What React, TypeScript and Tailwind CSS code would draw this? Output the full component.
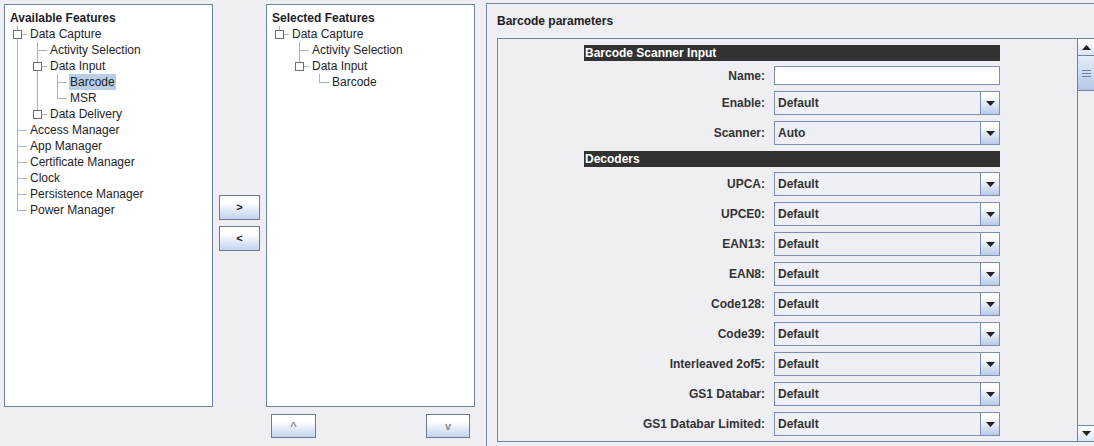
import React from 'react'

type Node = { label: string; children?: Node[]; selected?: boolean }
type Row = { label: string; guides: boolean[]; last: boolean; handle: boolean; selected?: boolean }

const available: Node[] = [
  {
    label: 'Data Capture',
    children: [
      { label: 'Activity Selection' },
      { label: 'Data Input', children: [{ label: 'Barcode', selected: true }, { label: 'MSR' }] },
      { label: 'Data Delivery', children: [] },
    ],
  },
  { label: 'Access Manager' },
  { label: 'App Manager' },
  { label: 'Certificate Manager' },
  { label: 'Clock' },
  { label: 'Persistence Manager' },
  { label: 'Power Manager' },
]

const selected: Node[] = [
  {
    label: 'Data Capture',
    children: [{ label: 'Activity Selection' }, { label: 'Data Input', children: [{ label: 'Barcode' }] }],
  },
]

function flatten(nodes: Node[], guides: boolean[] = []): Row[] {
  const out: Row[] = []
  nodes.forEach((n, i) => {
    const last = i === nodes.length - 1
    out.push({ label: n.label, guides, last, handle: !!n.children, selected: n.selected })
    if (n.children && n.children.length) out.push(...flatten(n.children, [...guides, !last]))
  })
  return out
}

const LINE = 'bg-[#a2b2cc]'

function TreeRow({ row }: { row: Row }) {
  return (
    <div className="flex h-[16px] items-center pl-[2px]">
      {row.guides.map((g, i) => (
        <div key={i} className="relative h-full w-[20px] shrink-0">
          {g && <div className={`absolute left-[10px] top-0 bottom-0 w-px ${LINE}`} />}
        </div>
      ))}
      <div className="relative h-full w-[20px] shrink-0">
        <div className={`absolute left-[10px] top-0 w-px ${LINE} ${row.last ? 'h-[8px]' : 'h-full'}`} />
        <div className={`absolute left-[10px] top-[8px] h-px w-[10px] ${LINE}`} />
        {row.handle && (
          <div className="absolute left-[6px] top-[4px] h-[9px] w-[9px] border border-[#6e6e78] bg-white" />
        )}
      </div>
      <span
        className={`ml-[2px] whitespace-nowrap px-px leading-[16px] ${row.selected ? 'bg-[#b8cfe5]' : ''}`}
      >
        {row.label}
      </span>
    </div>
  )
}

function Tree({ title, nodes }: { title: string; nodes: Node[] }) {
  const rows = flatten(nodes)
  return (
    <div className="h-[403px] border border-[#7083a0] bg-white pt-[5px] text-[12px] text-[#1e1e28]">
      <div className="h-[16px] pl-[5px] font-bold leading-[16px]">{title}</div>
      {rows.map((r, i) => (
        <TreeRow key={i} row={r} />
      ))}
    </div>
  )
}

function SmallButton({ label, className, faded }: { label: string; className: string; faded?: boolean }) {
  return (
    <div
      className={`flex items-center justify-center border border-[#6a7b9a] bg-gradient-to-b from-white from-30% to-[#c3d3ec] text-[11px] font-bold ${faded ? 'text-[#8a8a8a]' : 'text-[#222]'} ${className}`}
    >
      {label}
    </div>
  )
}

function Arrow({ up }: { up?: boolean }) {
  return (
    <svg width="9" height="5" viewBox="0 0 9 5">
      <path d={up ? 'M0 5 L4.5 0 L9 5 Z' : 'M0 0 L9 0 L4.5 5 Z'} fill="#222" />
    </svg>
  )
}

function Header({ text }: { text: string }) {
  return <div className="h-[16px] bg-[#323232] pl-px text-[12px] font-bold leading-[16px] text-white">{text}</div>
}

function Combo({ label, value }: { label: string; value: string }) {
  return (
    <div className="mt-[6px] flex h-[24px] items-center">
      <div className="w-[190px] shrink-0 pr-[9px] text-right text-[12px] font-bold text-[#333]">{label}</div>
      <div className="flex h-full w-[226px] border border-[#7d8fb0] bg-[#eef0f5]">
        <div className="flex flex-1 items-center pl-[3px] text-[12px] font-bold text-[#333]">{value}</div>
        <div className="flex w-[19px] items-center justify-center border-l border-[#7d8fb0] bg-gradient-to-b from-white from-20% to-[#b9cbe8]">
          <Arrow />
        </div>
      </div>
    </div>
  )
}

const decoders = [
  'UPCA:',
  'UPCE0:',
  'EAN13:',
  'EAN8:',
  'Code128:',
  'Code39:',
  'Interleaved 2of5:',
  'GS1 Databar:',
  'GS1 Databar Limited:',
]

export default function App() {
  return (
    <div className="flex h-[446px] w-[1094px] overflow-hidden bg-[#eeeef3] font-['Liberation_Sans',Arial,sans-serif]">
      <div className="w-[4px] shrink-0" />
      <div className="w-[209px] shrink-0 pt-[4px]">
        <Tree title="Available Features" nodes={available} />
      </div>
      <div className="flex w-[53px] shrink-0 flex-col items-center gap-[6px] pt-[195px]">
        <SmallButton label=">" className="h-[25px] w-[41px]" />
        <SmallButton label="<" className="h-[25px] w-[41px]" />
      </div>
      <div className="w-[209px] shrink-0 pt-[4px]">
        <Tree title="Selected Features" nodes={selected} />
        <div className="mt-[7px] flex justify-between pl-[5px] pr-[5px]">
          <SmallButton label="^" faded className="h-[24px] w-[45px]" />
          <SmallButton label="v" faded className="h-[24px] w-[44px]" />
        </div>
      </div>
      <div className="w-[11px] shrink-0" />
      <div className="mt-[3px] flex min-w-0 flex-1 flex-col border-l border-t border-[#7083a0] pl-[10px]">
        <div className="pt-[9px] text-[12px] font-bold leading-[16px] text-[#222]">Barcode parameters</div>
        <div className="mt-[9px] flex h-[404px] border-l border-t border-b border-[#7083a0]">
          <div className="min-w-0 flex-1 overflow-hidden">
            <div className="ml-[86px] w-[416px] pt-[6px]">
              <Header text="Barcode Scanner Input" />
              <div className="mt-[5px] flex h-[19px] items-center">
                <div className="w-[190px] shrink-0 pr-[9px] text-right text-[12px] font-bold text-[#333]">Name:</div>
                <div className="h-full w-[226px] border border-[#7d8fb0] bg-white" />
              </div>
              <Combo label="Enable:" value="Default" />
              <Combo label="Scanner:" value="Auto" />
              <div className="mt-[6px]" />
              <Header text="Decoders" />
              <div className="-mt-px">
                {decoders.map((d) => (
                  <Combo key={d} label={d} value="Default" />
                ))}
              </div>
              <div className="ml-[190px] mt-[6px] h-[24px] w-[226px] border border-[#7d8fb0] bg-[#eef0f5]" />
            </div>
          </div>
          <div className="flex w-[17px] shrink-0 flex-col border-l border-[#7083a0]">
            <div className="flex h-[17px] items-center justify-center border-b border-[#7083a0] bg-gradient-to-b from-white to-[#dde6f4]">
              <Arrow up />
            </div>
            <div className="flex h-[35px] flex-col items-center justify-center gap-[2px] border-b border-[#7083a0] bg-gradient-to-b from-[#e4ecf8] to-[#b4c7e6]">
              <div className="h-px w-[9px] bg-[#7083a0]" />
              <div className="h-px w-[9px] bg-[#7083a0]" />
              <div className="h-px w-[9px] bg-[#7083a0]" />
            </div>
            <div className="flex-1" />
            <div className="flex h-[16px] items-center justify-center border-t border-[#7083a0] bg-gradient-to-b from-white to-[#dde6f4]">
              <Arrow />
            </div>
          </div>
        </div>
      </div>
    </div>
  )
}
